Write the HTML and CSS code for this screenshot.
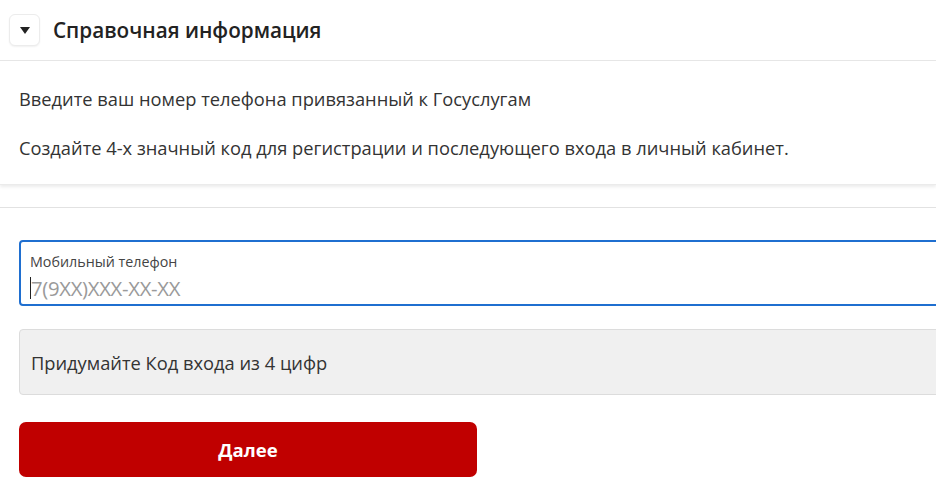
FILE: index.html
```html
<!DOCTYPE html>
<html lang="ru">
<head>
<meta charset="utf-8">
<title>Справочная информация</title>
<link rel="stylesheet" href="styles.css">
</head>
<body>
<section class="info">
  <header class="info-head">
    <button class="toggle" type="button" aria-label="Свернуть">
      <svg width="12" height="9" viewBox="0 0 12 9"><path d="M1 1h10L6 8z" fill="#222"/></svg>
    </button>
    <h2 class="info-title">Справочная информация</h2>
  </header>
  <div class="info-body">
    <p>Введите ваш номер телефона привязанный к Госуслугам</p>
    <p>Создайте 4-х значный код для регистрации и последующего входа в личный кабинет.</p>
  </div>
</section>
<div class="divider"></div>
<form class="form">
  <label class="field field-active">
    <span class="field-label">Мобильный телефон</span>
    <span class="field-input"><span class="caret"></span>7(9XX)XXX-XX-XX</span>
  </label>
  <div class="field field-disabled">Придумайте Код входа из 4 цифр</div>
  <button class="submit" type="button">Далее</button>
</form>
</body>
</html>
```
FILE: styles.css
```css
html, body {
  margin: 0;
  padding: 0;
  background: #fff;
  overflow: hidden;
  width: 936px;
  height: 494px;
}
body {
  font-family: "Open Sans", "Noto Sans", sans-serif;
  color: #333;
}
.info {
  box-shadow: 0 2px 3px rgba(0,0,0,0.08);
  border-bottom: 1px solid #ebebeb;
}
.info-head {
  display: flex;
  align-items: center;
  height: 61px;
  padding-left: 9px;
  border-bottom: 1px solid #e6e6e6;
  box-sizing: border-box;
}
.toggle {
  width: 31px;
  height: 32px;
  margin: 0;
  padding: 0;
  border: 1px solid #ececec;
  border-radius: 6px;
  background: #fff;
  box-shadow: 0 1px 2px rgba(0,0,0,0.06);
  display: flex;
  align-items: center;
  justify-content: center;
}
.info-title {
  margin: 0 0 0 13px;
  font-size: 20.7px;
  font-weight: 600;
  color: #222;
}
.info-body {
  padding: 27px 19px 25px;
}
.info-body p {
  margin: 0;
  font-size: 18.3px;
  line-height: 22px;
  color: #333;
}
.info-body p + p {
  margin-top: 27px;
}
.divider {
  height: 1px;
  background: #e2e2e2;
  margin-top: 22px;
}
.form {
  padding: 32px 0 0 19px;
  display: flex;
  flex-direction: column;
  align-items: flex-start;
}
.field {
  width: 940px;
  height: 66px;
  box-sizing: border-box;
  border-radius: 4px;
  display: flex;
  flex-direction: column;
  justify-content: center;
}
.field-active {
  border: 2px solid #1f6fd0;
  padding: 11px 9px 0;
  justify-content: flex-start;
}
.field-label {
  font-size: 14.3px;
  line-height: 18px;
  color: #444;
}
.field-input {
  margin-top: 4px;
  font-size: 20.3px;
  line-height: 26px;
  color: #9a9a9a;
  display: flex;
  align-items: center;
  letter-spacing: -0.3px;
}
.caret {
  width: 1px;
  height: 22px;
  background: #222;
}
.field-disabled {
  margin-top: 23px;
  border: 1px solid #dcdcdc;
  background: #f0f0f0;
  padding: 0 11px;
  font-size: 18.3px;
  color: #333;
}
.submit {
  margin-top: 27px;
  width: 458px;
  height: 55px;
  background: #c00000;
  border: none;
  border-radius: 7px;
  color: #fff;
  font-family: "Open Sans", "Noto Sans", sans-serif;
  font-size: 18.6px;
  font-weight: 700;
}
```
